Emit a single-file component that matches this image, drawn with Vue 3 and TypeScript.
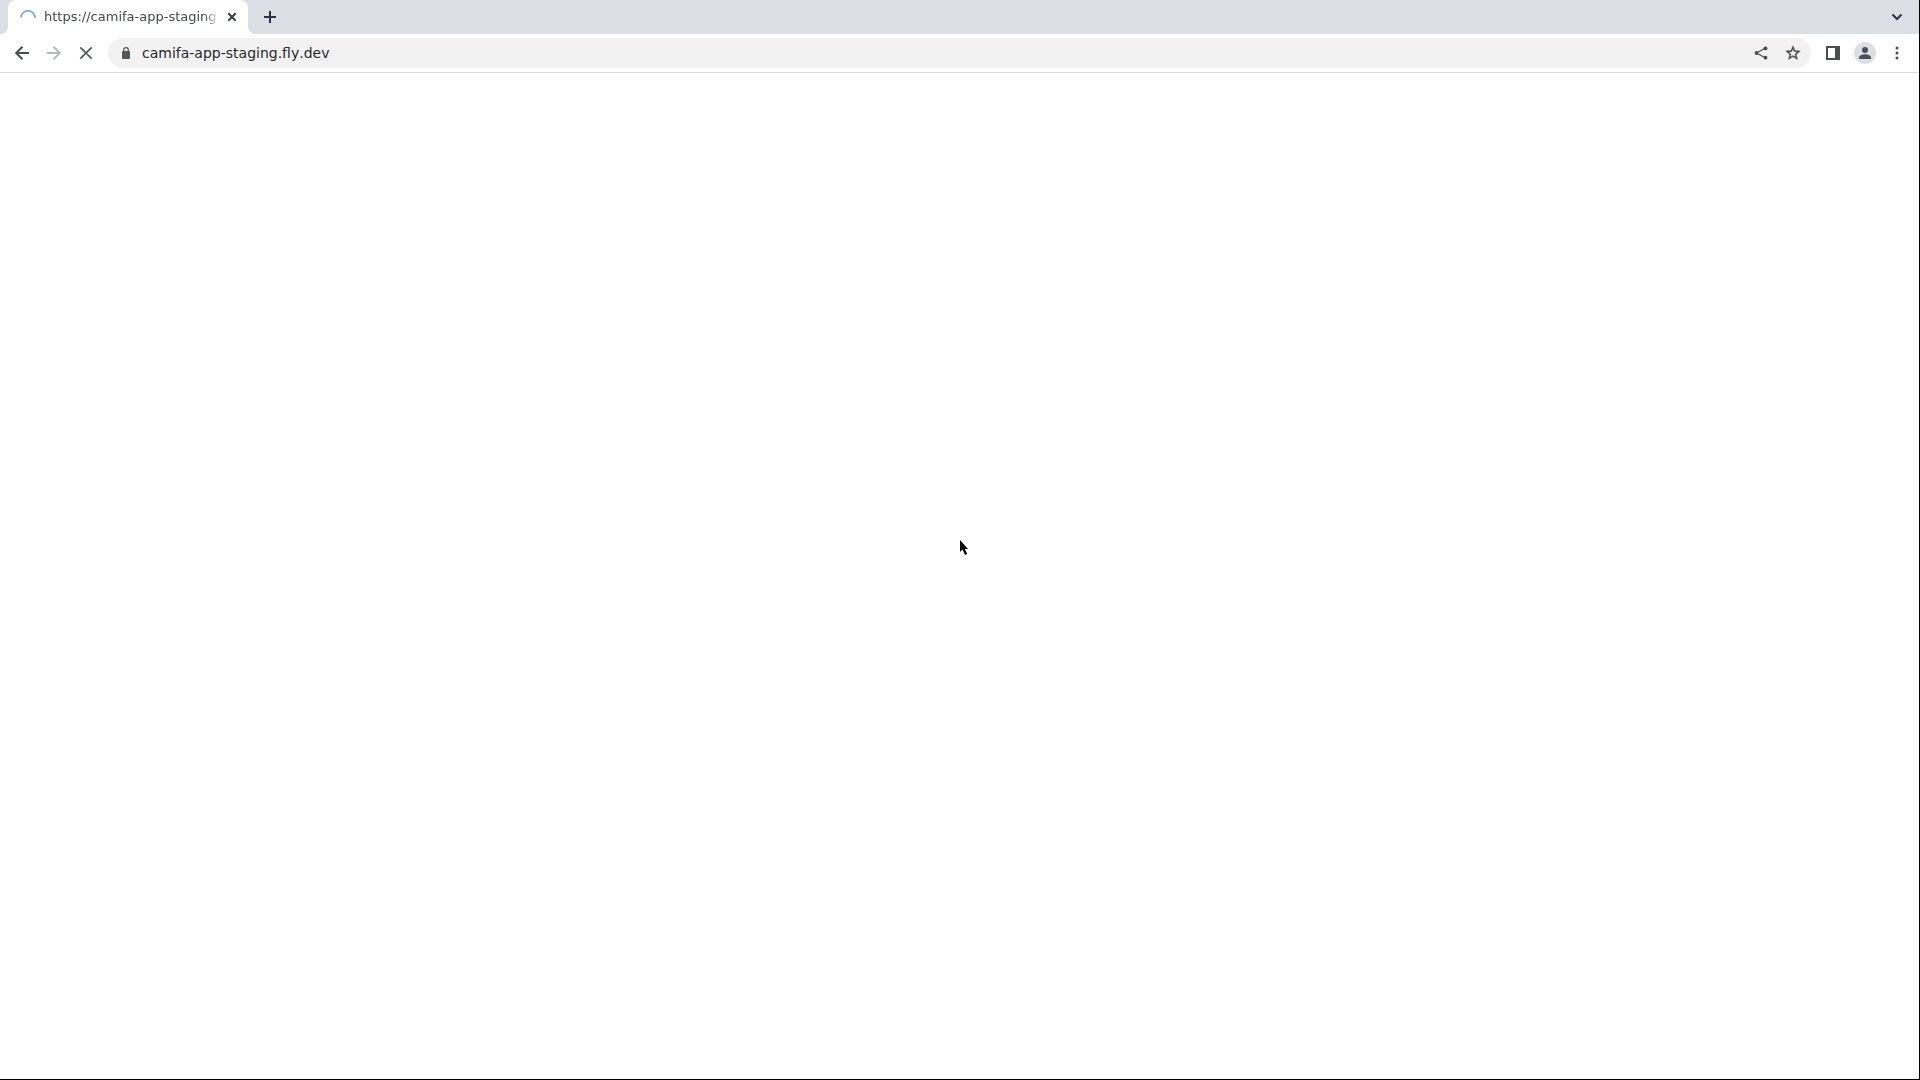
<script setup lang="ts">
import { ref } from 'vue'

const tabTitle = ref('https://camifa-app-staging')
const address = ref('camifa-app-staging.fly.dev')
</script>

<template>
  <div class="window">
    <header>
      <div class="tab-strip">
        <div class="tab">
          <svg class="spinner" width="18" height="18" viewBox="0 0 18 18" fill="none" aria-hidden="true">
            <path d="M2 9.5A7 7 0 0 1 16 10" stroke="#8fade0" stroke-width="2" />
          </svg>
          <span class="tab-title">{{ tabTitle }}</span>
          <button class="tab-close" type="button" aria-label="Close tab">
            <svg width="10" height="10" viewBox="0 0 10 10" fill="none" stroke="#3c4043" stroke-width="2">
              <path d="M1.3 1.3l7.4 7.4M8.7 1.3L1.3 8.7" />
            </svg>
          </button>
        </div>
        <button class="icon-button new-tab" type="button" aria-label="New tab">
          <svg width="14" height="14" viewBox="0 0 14 14" fill="none" stroke="#2f3142" stroke-width="2">
            <path d="M7 1v12M1 7h12" />
          </svg>
        </button>
        <button class="icon-button tab-search" type="button" aria-label="Search tabs">
          <svg width="12" height="12" viewBox="0 0 12 12" fill="none" stroke="#2f3142" stroke-width="2">
            <path d="M1.500 3.500L6 8l4.500-4.500" />
          </svg>
        </button>
      </div>

      <div class="toolbar">
        <nav class="buttons">
          <button class="icon-button" type="button" aria-label="Back">
            <svg width="16" height="16" viewBox="0 0 16 16" fill="none" stroke="#4b4d50" stroke-width="2">
              <path d="M15 8H2.500M8.500 1.700L2.200 8l6.300 6.300" />
            </svg>
          </button>
          <button class="icon-button" type="button" aria-label="Forward" disabled>
            <svg width="16" height="16" viewBox="0 0 16 16" fill="none" stroke="#b9babc" stroke-width="2">
              <path d="M1 8h12.500M7.500 1.700L13.800 8l-6.300 6.300" />
            </svg>
          </button>
          <button class="icon-button" type="button" aria-label="Stop loading">
            <svg width="14" height="14" viewBox="0 0 14 14" fill="none" stroke="#55575a" stroke-width="1.700">
              <path d="M1.300 1.300l11.400 11.400M12.700 1.300L1.300 12.700" />
            </svg>
          </button>
        </nav>

        <div class="omnibox">
          <svg class="lock" width="10" height="12" viewBox="0 0 10 12" aria-hidden="true">
            <rect x="1" y="4" width="8" height="8" rx="1" fill="#55575a" />
            <path d="M2.700 5V3a2.300 2.300 0 0 1 4.600 0v2" fill="none" stroke="#55575a" stroke-width="1.300" />
          </svg>
          <input v-model="address" class="address" type="text" aria-label="Address" spellcheck="false" />
          <button class="icon-button" type="button" aria-label="Share this page">
            <svg width="14" height="14" viewBox="0 0 14 14" fill="#4b4d50">
              <path d="M11.200 2.300L2.500 7l8.700 4.700" fill="none" stroke="#4b4d50" stroke-width="1.300" />
              <circle cx="11.500" cy="2.300" r="1.900" />
              <circle cx="2.500" cy="7" r="1.900" />
              <circle cx="11.500" cy="11.700" r="1.900" />
            </svg>
          </button>
          <button class="icon-button" type="button" aria-label="Bookmark this page">
            <svg width="16" height="16" viewBox="1 1 22 22" fill="#4b4d50" stroke="#4b4d50" stroke-width="0.600">
              <path d="M22 9.240l-7.190-.62L12 2 9.190 8.630 2 9.240l5.460 4.730L5.820 21 12 17.270 18.180 21l-1.630-7.030L22 9.240zM12 15.400l-3.760 2.270 1-4.280-3.320-2.880 4.380-.38L12 6.100l1.710 4.040 4.380.38-3.320 2.880 1 4.280L12 15.400z" />
            </svg>
          </button>
        </div>

        <div class="buttons">
          <button class="icon-button" type="button" aria-label="Side panel">
            <svg width="14" height="14" viewBox="0 0 14 14" fill="none">
              <path d="M1 1h12v12H1z" stroke="#4b4d50" stroke-width="2" />
              <path d="M9 1h4v12H9z" fill="#4b4d50" />
            </svg>
          </button>
          <button class="icon-button" type="button" aria-label="Profile">
            <svg width="22" height="22" viewBox="0 0 22 22">
              <circle cx="11" cy="11" r="11" fill="#dcdfe4" />
              <circle cx="11" cy="8" r="3" fill="#4b4f57" />
              <path d="M5 17v-1.500C5 13.200 9 12.200 11 12.200s6 1 6 3.300V17z" fill="#4b4f57" />
            </svg>
          </button>
          <button class="icon-button" type="button" aria-label="Menu">
            <svg width="4" height="14" viewBox="0 0 4 14" fill="#4b4d50">
              <circle cx="2" cy="2" r="1.500" />
              <circle cx="2" cy="7" r="1.500" />
              <circle cx="2" cy="12" r="1.500" />
            </svg>
          </button>
        </div>
      </div>
    </header>

    <main class="page">
      <svg class="pointer" width="10" height="16" viewBox="0 0 10 16" aria-hidden="true">
        <path d="M0 0v12l2.600-2.500L5 15l2.200-1-2.400-5H8z" fill="#000" />
      </svg>
    </main>
  </div>
</template>

<style>
body {
  margin: 0;
}
</style>

<style scoped>
.window {
  box-sizing: border-box;
  min-height: 100vh;
  display: flex;
  flex-direction: column;
  border-right: 1px solid #000;
  border-bottom: 1px solid #000;
  background: #fff;
  font-family: "DejaVu Sans", sans-serif;
  font-kerning: none;
}

button {
  padding: 0;
  border: 0;
  background: none;
}

svg {
  display: block;
  flex: none;
}

.icon-button {
  flex: none;
  width: 28px;
  height: 28px;
  display: flex;
  align-items: center;
  justify-content: center;
}

.tab-strip {
  height: 34px;
  display: flex;
  align-items: center;
  padding: 0 8px;
  background: #dcdfe6;
}

.tab {
  position: relative;
  box-sizing: border-box;
  width: 240px;
  height: 34px;
  display: flex;
  align-items: center;
  padding: 0 8px 0 11px;
  border-radius: 8px 8px 0 0;
  background: #fff;
}

.tab::before,
.tab::after {
  content: "";
  position: absolute;
  bottom: 0;
  width: 8px;
  height: 8px;
}

.tab::before {
  right: 100%;
  background: radial-gradient(circle at 0 0, transparent 8px, #fff 8px);
}

.tab::after {
  left: 100%;
  background: radial-gradient(circle at 100% 0, transparent 8px, #fff 8px);
}

.tab-title {
  flex: 1;
  min-width: 0;
  margin-left: 7px;
  white-space: nowrap;
  font-size: 13px;
  line-height: 18px;
  color: #45474a;
  mask-image: linear-gradient(to right, #000 calc(100% - 16px), transparent);
}

.tab-close {
  flex: none;
  width: 16px;
  height: 16px;
  display: flex;
  align-items: center;
  justify-content: center;
  margin-left: 4px;
}

.new-tab {
  margin-left: 8px;
}

.tab-search {
  margin-left: auto;
}

.toolbar {
  height: 38px;
  display: flex;
  align-items: center;
  gap: 8px;
  padding: 0 8px;
  border-bottom: 1px solid #dadce0;
}

.buttons {
  display: flex;
  gap: 4px;
}

.omnibox {
  box-sizing: border-box;
  flex: 1;
  height: 30px;
  display: flex;
  align-items: center;
  gap: 4px;
  padding: 0 4px 0 13px;
  border-radius: 15px;
  background: #f2f2f3;
}

.address {
  flex: 1;
  min-width: 0;
  height: 20px;
  padding: 0;
  margin-left: 7px;
  border: 0;
  outline: 0;
  background: transparent;
  font-family: inherit;
  font-size: 14px;
  font-kerning: none;
  color: #27292c;
}

.page {
  flex: 1;
  position: relative;
}

.pointer {
  position: absolute;
  left: 50%;
  top: calc(50% - 36px);
}
</style>
